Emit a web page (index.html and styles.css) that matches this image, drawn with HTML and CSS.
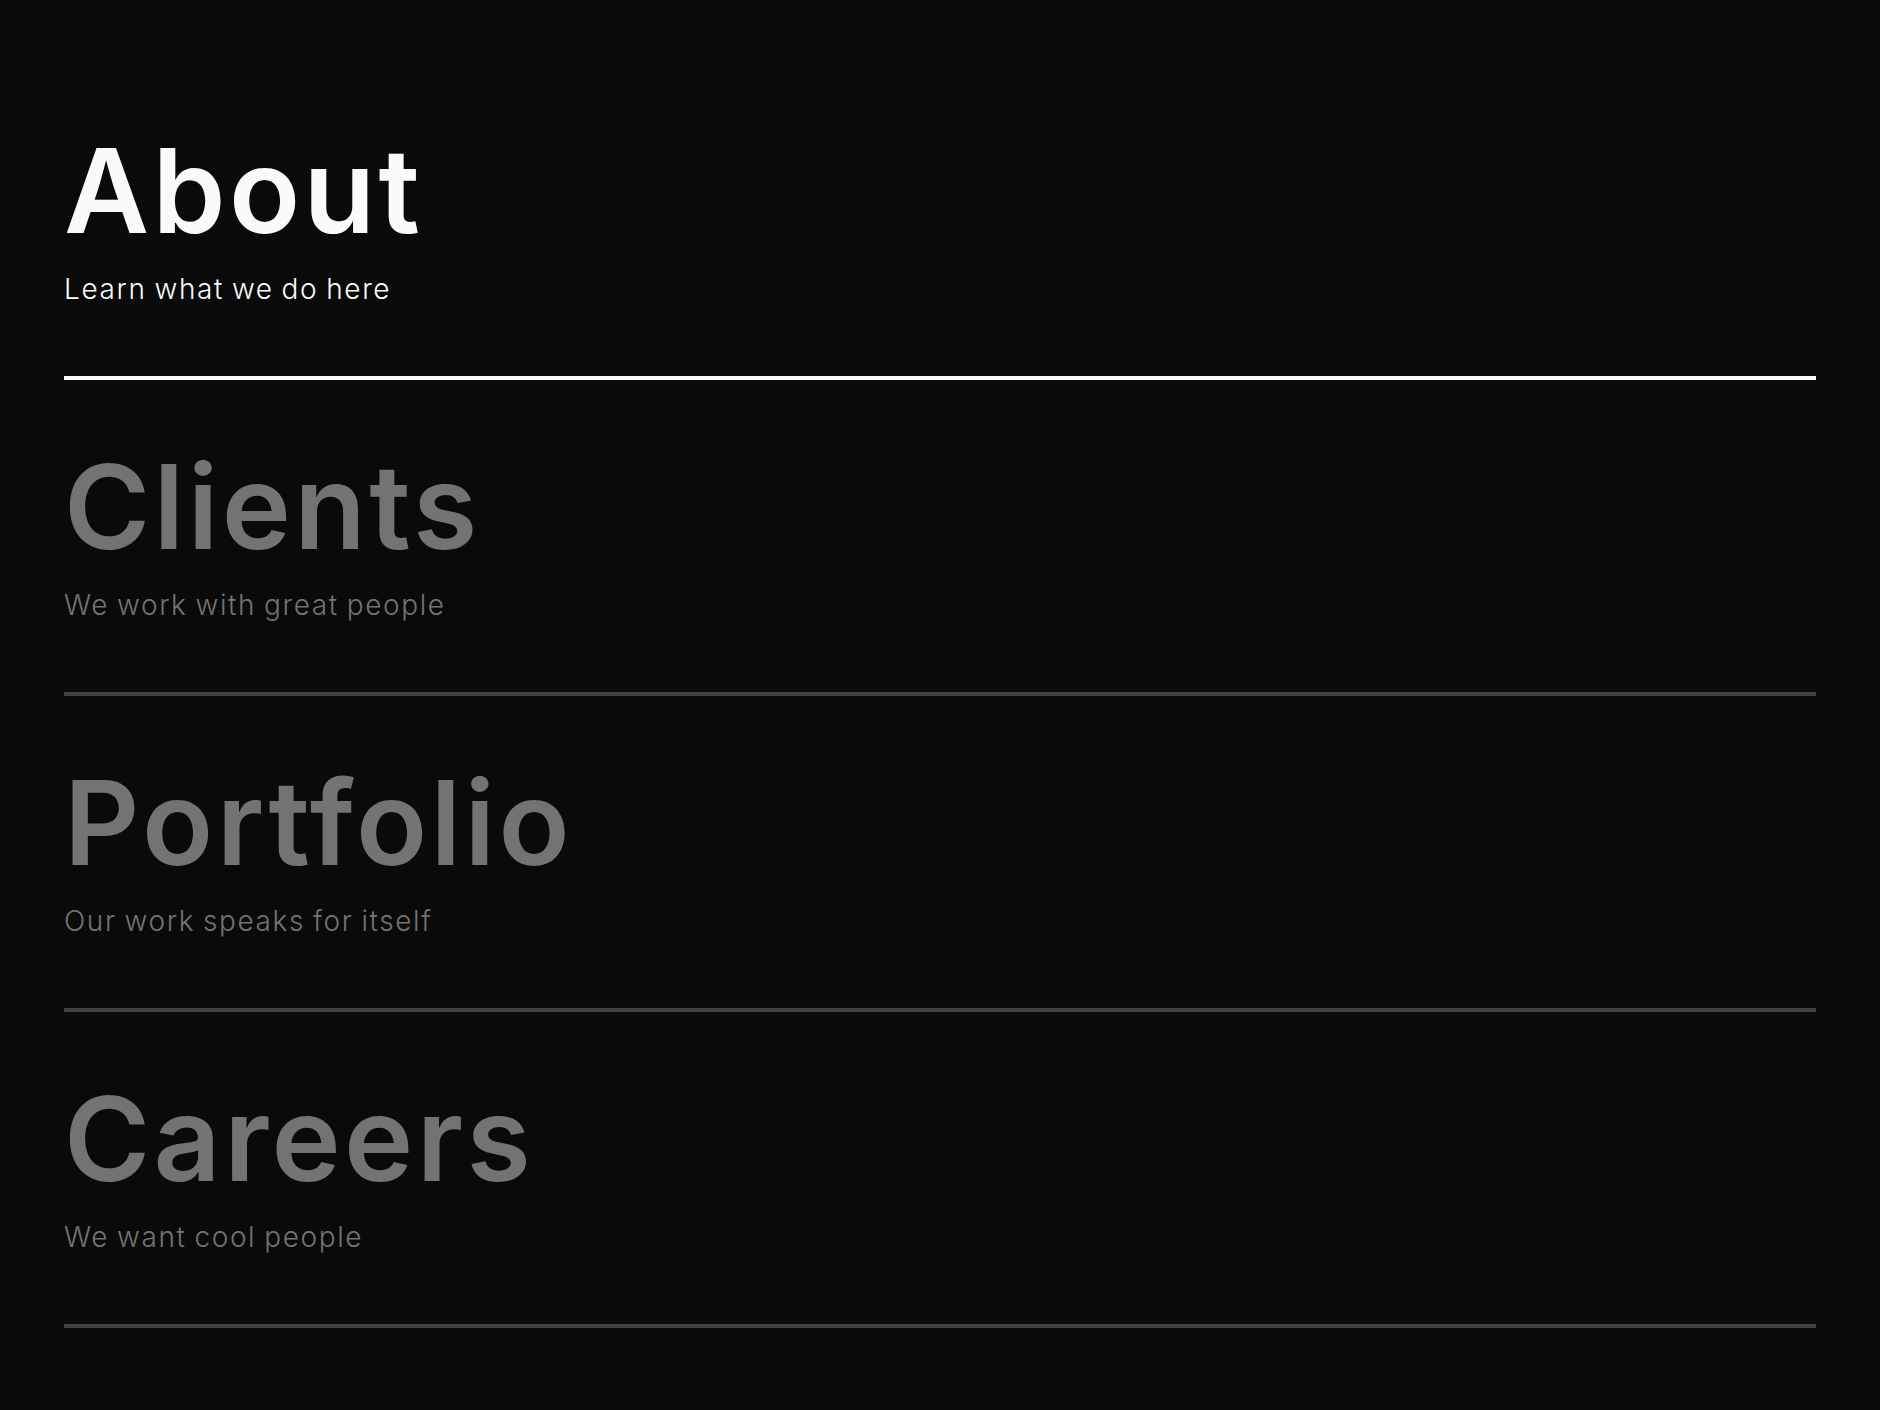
FILE: index.html
```html
<!DOCTYPE html>
<html lang="en">
<head>
<meta charset="utf-8">
<title>Menu</title>
<link rel="stylesheet" href="styles.css">
</head>
<body>
<nav class="menu">
  <a class="item item-active" href="#">
    <span class="title">About</span>
    <span class="sub">Learn what we do here</span>
  </a>
  <a class="item" href="#">
    <span class="title">Clients</span>
    <span class="sub">We work with great people</span>
  </a>
  <a class="item" href="#">
    <span class="title">Portfolio</span>
    <span class="sub">Our work speaks for itself</span>
  </a>
  <a class="item" href="#">
    <span class="title">Careers</span>
    <span class="sub">We want cool people</span>
  </a>
</nav>
</body>
</html>
```
FILE: styles.css
```css
html, body {
  margin: 0;
  padding: 0;
  background: #0a0a0a;
}
body {
  font-family: Inter, "Liberation Sans", sans-serif;
  min-height: 100vh;
}
.menu {
  display: flex;
  flex-direction: column;
  padding: 64px;
}
.item {
  display: flex;
  flex-direction: column;
  padding: 68px 0 73px;
  border-bottom: 4px solid #404040;
  color: #737373;
  text-decoration: none;
}
.item-active {
  color: #fafafa;
  border-bottom-color: #fafafa;
}
.title {
  font-size: 117px;
  line-height: 117px;
  font-weight: 600;
  letter-spacing: 3.4px;
}
.sub {
  margin-top: 26px;
  font-size: 28px;
  line-height: 28px;
  font-weight: 300;
  letter-spacing: 1.6px;
  word-spacing: -1.5px;
}
```
